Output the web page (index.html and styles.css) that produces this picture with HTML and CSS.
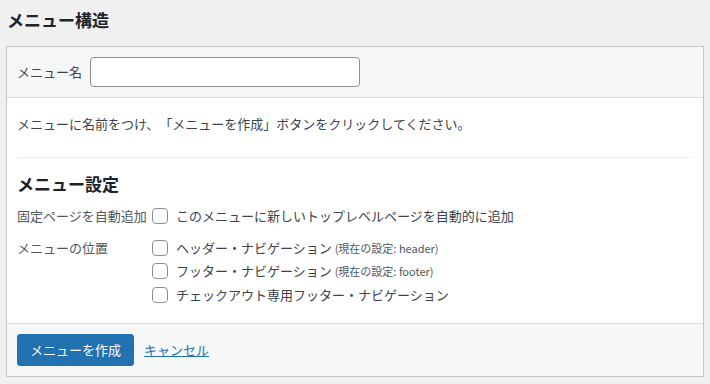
FILE: index.html
```html
<!DOCTYPE html>
<html lang="ja">
<head>
<meta charset="utf-8">
<title>メニュー構造</title>
<link rel="stylesheet" href="styles.css">
</head>
<body>
<div class="wrap">
  <h2 class="title">メニュー構造</h2>
  <div class="box">
    <div class="box-head">
      <label class="name-label" for="menu-name">メニュー名</label>
      <input class="name-input" id="menu-name" type="text">
    </div>
    <div class="box-body">
      <p class="intro">メニューに名前をつけ、「メニューを作成」ボタンをクリックしてください。</p>
      <div class="settings">
        <h3 class="settings-title">メニュー設定</h3>
        <div class="row row-auto">
          <div class="row-label">固定ページを自動追加</div>
          <div class="row-field">
            <label class="opt"><input type="checkbox" class="cb"><span>このメニューに新しいトップレベルページを自動的に追加</span></label>
          </div>
        </div>
        <div class="row row-loc">
          <div class="row-label">メニューの位置</div>
          <div class="row-field">
            <label class="opt"><input type="checkbox" class="cb"><span>ヘッダー・ナビゲーション <span class="note">(現在の設定: header)</span></span></label>
            <label class="opt"><input type="checkbox" class="cb"><span>フッター・ナビゲーション <span class="note">(現在の設定: footer)</span></span></label>
            <label class="opt"><input type="checkbox" class="cb"><span>チェックアウト専用フッター・ナビゲーション</span></label>
          </div>
        </div>
      </div>
    </div>
    <div class="box-foot">
      <button class="btn-primary" type="button">メニューを作成</button>
      <a class="cancel" href="#">キャンセル</a>
    </div>
  </div>
</div>
</body>
</html>
```

FILE: styles.css
```css
html, body {
  margin: 0;
  padding: 0;
  background: #f0f0f1;
}
body {
  font-family: "Noto Sans CJK JP", "Noto Sans", sans-serif;
  font-size: 13px;
  color: #3c434a;
  text-spacing-trim: space-all;
}
.wrap {
  padding: 0 6px;
}
.title {
  margin: 10px 0 16px 1px;
  font-size: 17px;
  line-height: 20px;
  font-weight: 700;
  color: #1d2327;
}
.box {
  border: 1px solid #c3c4c7;
  background: #fff;
}
.box-head {
  display: flex;
  align-items: center;
  gap: 8px;
  padding: 10px;
  background: #f6f7f7;
  border-bottom: 1px solid #dcdcde;
}
.name-label {
  line-height: 20px;
  color: #3c434a;
}
.name-input {
  box-sizing: border-box;
  width: 270px;
  height: 30px;
  margin: 0;
  border: 1px solid #8c8f94;
  border-radius: 4px;
  background: #fff;
  padding: 0 8px;
  font: inherit;
}
.box-body {
  padding: 0 10px 16px;
}
.intro {
  margin: 16px 0 23px;
  line-height: 20px;
}
.settings {
  border-top: 1px solid #f0f0f1;
}
.settings-title {
  margin: 14px 0 8px;
  font-size: 17px;
  line-height: 24px;
  font-weight: 700;
  color: #1d2327;
}
.row {
  display: grid;
  grid-template-columns: 135px 1fr;
}
.row-auto {
  margin-bottom: 8px;
}
.row-label {
  line-height: 24px;
  color: #50575e;
}
.row-loc .row-label {
  line-height: 23.5px;
}
.row-field {
  display: flex;
  flex-direction: column;
}
.opt {
  display: flex;
  align-items: center;
  gap: 8px;
  height: 24px;
  line-height: 20px;
}
.row-loc .opt {
  height: 23.5px;
}
.cb {
  appearance: none;
  -webkit-appearance: none;
  box-sizing: border-box;
  width: 16px;
  height: 16px;
  margin: 0;
  border: 1px solid #8c8f94;
  border-radius: 4px;
  background: #fff;
  flex: none;
}
.note {
  font-size: 11px;
  color: #50575e;
}
.box-foot {
  display: flex;
  align-items: center;
  gap: 10px;
  padding: 10px;
  background: #f6f7f7;
  border-top: 1px solid #dcdcde;
}
.btn-primary {
  height: 32px;
  padding: 0 12px;
  border: 1px solid #2271b1;
  border-radius: 3px;
  background: #2271b1;
  color: #fff;
  font: inherit;
  font-size: 13px;
  line-height: 30px;
}
.cancel {
  color: #2271b1;
  text-decoration: underline;
  line-height: 20px;
}
```
